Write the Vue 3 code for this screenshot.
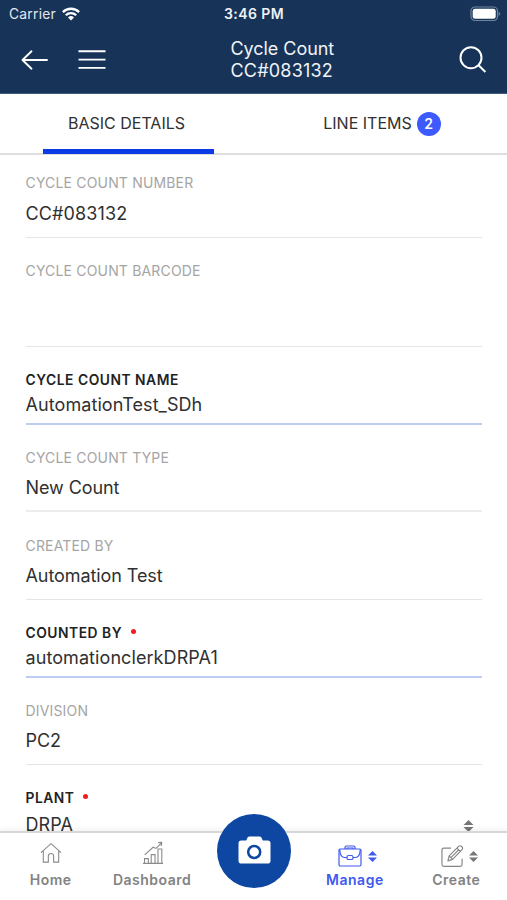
<script setup>
const fields = [
  { label: 'CYCLE COUNT NUMBER', value: 'CC#083132', kind: 'first' },
  { label: 'CYCLE COUNT BARCODE', value: '', kind: 'barcode' },
  { label: 'CYCLE COUNT NAME', value: 'AutomationTest_SDh', kind: 'editable' },
  { label: 'CYCLE COUNT TYPE', value: 'New Count', kind: 'thick' },
  { label: 'CREATED BY', value: 'Automation Test', kind: 'created' },
  { label: 'COUNTED BY', value: 'automationclerkDRPA1', kind: 'editable', required: true },
  { label: 'DIVISION', value: 'PC2', kind: '' },
  { label: 'PLANT', value: 'DRPA', kind: 'editable plant', required: true, select: true },
]
</script>

<template>
  <div class="screen">
    <header class="header">
      <div class="status">
        <div class="carrier">
          <span>Carrier</span>
          <svg width="18" height="14" viewBox="0 0 18 14" fill="none" stroke="#fff" stroke-width="2.3">
            <path d="M.9 5.1a11.5 11.5 0 0 1 16.2 0M3.8 8.2a7.4 7.4 0 0 1 10.4 0" />
            <path d="M6 10.4a4.3 4.3 0 0 1 6 0L9 13.5Z" fill="#fff" stroke="none" />
          </svg>
        </div>
        <strong class="time">3:46 PM</strong>
        <svg class="battery" width="31" height="16" viewBox="0 0 31 16">
          <rect x="1" y="1" width="26.5" height="13.5" rx="4" fill="none" stroke="#71839b" stroke-width="1.2" />
          <rect x="2.7" y="2.8" width="23" height="10" rx="2.4" fill="#fff" />
          <path d="M28.7 5.5q3 2.3 0 4.6Z" fill="#71839b" />
        </svg>
      </div>
      <div class="toolbar">
        <div class="left">
          <svg width="28" height="22" viewBox="0 0 28 22" fill="none" stroke="#fff" stroke-width="1.9" stroke-linecap="round" stroke-linejoin="round">
            <path d="M26 11H1.5M10.5 2.3 1.5 11l9 8.7" />
          </svg>
          <svg width="28" height="22" viewBox="0 0 28 22" fill="none" stroke="#fff" stroke-width="1.9">
            <path d="M.5 2.2h27M.5 10.6h27M.5 18.9h27" />
          </svg>
        </div>
        <h1 class="title"><span>Cycle Count</span><br><span class="number">CC#083132</span></h1>
        <svg class="search" width="28" height="28" viewBox="0 0 28 28" fill="none" stroke="#fff" stroke-width="2">
          <circle cx="12" cy="11.7" r="10.5" />
          <path d="m19.6 19.2 6.8 6.8" />
        </svg>
      </div>
    </header>

    <nav class="tabs">
      <div class="tab active"><span>BASIC DETAILS</span></div>
      <div class="tab"><span>LINE ITEMS</span><span class="badge">2</span></div>
    </nav>

    <main class="fields">
      <section v-for="field in fields" :key="field.label" class="field" :class="field.kind">
        <div class="label">{{ field.label }}<i v-if="field.required" class="required" /></div>
        <div class="value">
          <span>{{ field.value }}</span>
          <svg v-if="field.select" class="sort large" viewBox="0 0 10 12"><path d="M0 5 5 0l5 5ZM0 7h10l-5 5Z" /></svg>
        </div>
      </section>
    </main>

    <footer class="bottom">
      <div class="item">
        <div class="glyph home">
          <svg width="22" height="22" viewBox="0 0 24 24" fill="none" stroke="#8b8b8b" stroke-width="1.2">
            <path d="M1 11.500 12 1.800l11 9.700M3.600 9.500V22h5.500v-6.500c0-4 5.800-4 5.800 0V22h5.500V9.500" />
          </svg>
        </div>
        <span>Home</span>
      </div>
      <div class="item">
        <div class="glyph chart">
          <svg width="21" height="25" viewBox="0 0 22 26" fill="none" stroke="#8b8b8b" stroke-width="1.150">
            <path d="M0 24.400h21M1.600 24.400v-5h4v5M8.600 24.400v-9.200h4v9.200M15.700 24.400V9.300h4v15.100" />
            <path d="m1.800 15.500 8.800-8 3 1.200 5.600-5.600M15.800 2.700l3.800-.3-.4 3.800" />
          </svg>
        </div>
        <span>Dashboard</span>
      </div>
      <div class="item"></div>
      <div class="item selected">
        <div class="glyph pair">
          <svg width="24" height="22" viewBox="0 0 24 22" fill="none" stroke="#4059ee" stroke-width="1.2">
            <rect x="1" y="4" width="22" height="17" rx="1.2" />
            <path d="M7 4V2.400Q7 1 8.400 1h7.200Q17 1 17 2.400V4M9 4V3h6v1M1.800 4.500c.1 5.700 1.700 8 5 8h10.400c3.300 0 4.900-2.300 5-8" />
            <rect x="9" y="10.500" width="6" height="4" rx="1.600" fill="#fff" />
          </svg>
          <svg class="sort" viewBox="0 0 10 12"><path d="M0 5 5 0l5 5ZM0 7h10l-5 5Z" /></svg>
        </div>
        <span>Manage</span>
      </div>
      <div class="item">
        <div class="glyph pair create">
          <svg width="23" height="24" viewBox="0 0 24 24" fill="none" stroke="#858585" stroke-width="1.2" stroke-linejoin="round">
            <path d="M10.500 3.800H3q-2 0-2 2v15q0 2 2 2h17q2 0 2-2v-6" />
            <path d="m7.200 17.100 1.300-5.200L18.400 2q1.500-1.400 3.200.1 1.700 1.600.3 3.200l-9.800 10.200ZM8.500 11.900l3.600 3.600M16.600 3.800l3.500 3.500M10.400 13.600l8-8" />
          </svg>
          <svg class="sort" viewBox="0 0 10 12"><path d="M0 5 5 0l5 5ZM0 7h10l-5 5Z" /></svg>
        </div>
        <span>Create</span>
      </div>
      <div class="camera">
        <svg width="33" height="29" viewBox="0 0 33 29">
          <path d="M3.300 4.600H8.200L9.600 1.600Q10.200.5 11.500.5h10Q22.800.5 23.400 1.600L24.800 4.600h4.900q2.800 0 2.800 2.800v17.300q0 2.800-2.800 2.800H3.300Q.5 27.500.5 24.700V7.400Q.5 4.600 3.300 4.600Z" fill="#fff" />
          <circle cx="16.200" cy="16" r="6" fill="#fff" stroke="#0d47a1" stroke-width="2.500" />
        </svg>
      </div>
    </footer>
  </div>
</template>

<style>
body { background: #fff; }
</style>

<style scoped>
* { box-sizing: border-box; }
svg { display: block; flex: none; }
.screen { position: relative; display: flex; flex-direction: column; width: 507px; height: 900px; overflow: hidden; background: #fff; color: #303030; font-family: Inter, "Liberation Sans", sans-serif; }
.header { height: 94px; flex: none; background: #173458; color: #fff; border-bottom: 1px solid #405b7b; }
.status { height: 27px; display: grid; grid-template-columns: 1fr auto 1fr; align-items: center; padding: 0 6px 0 9px; }
.carrier { display: flex; align-items: center; gap: 6px; font-size: 13.800px; letter-spacing: .25px; color: #e3e8ee; }
.time { font-size: 14px; font-weight: 600; line-height: 20px; letter-spacing: .4px; margin-left: -2px; color: #eef1f5; }
.battery { justify-self: end; }
.toolbar { height: 66px; display: grid; grid-template-columns: 209.500px auto 1fr; align-items: center; padding: 0 20px 1px 21px; }
.left { display: flex; gap: 29px; padding-top: 1px; }
.title { margin: 0; font-size: 18px; font-weight: 400; line-height: 22px; letter-spacing: -.05px; color: #f1f3f7; }
.number { letter-spacing: .2px; }
.search { justify-self: end; }
.tabs { height: 61px; flex: none; display: grid; grid-template-columns: 257px 250px; border-bottom: 2px solid #dedede; }
.tab { display: flex; align-items: center; justify-content: center; gap: 5px; height: 59px; font-size: 16px; }
.tab > span:first-child { margin-top: -2px; }
.tab.active { width: 171px; margin-left: 43px; padding: 4px 4px 0 0; border-bottom: 5px solid #0b3be4; height: 60px; }
.badge { display: grid; place-items: center; width: 24px; height: 24px; border-radius: 50%; background: #3d5afe; color: #fff; font-size: 14px; font-weight: 600; }
.fields { flex: 1; min-height: 0; padding: 0 25px 0 25.500px; overflow: hidden; }
.field { height: 87px; padding-top: 23px; border-bottom: 1px solid #e5e5e5; }
.field.first { height: 83px; padding-top: 18px; }
.field.first .value { margin-top: 10px; letter-spacing: .12px; }
.field.barcode { height: 109px; }
.field.created { height: 88px; padding-top: 24px; }
.field.editable { height: 78px; border-bottom: 2px solid #c0cdf2; }
.field.thick { border-bottom: 2px solid #ededed; }
.label { height: 20px; line-height: 20px; font-size: 14px; letter-spacing: .17px; color: #a5a5a5; display: flex; }
.editable .label { color: #222; font-weight: 600; font-size: 13.800px; letter-spacing: .53px; }
.required { width: 5px; height: 5px; border-radius: 50%; background: #f51c20; margin: 6px 0 0 9px; }
.value { display: flex; justify-content: space-between; align-items: center; height: 22px; margin-top: 9px; font-size: 18px; line-height: 22px; letter-spacing: -.08px; }
.editable .value { margin-top: 4px; letter-spacing: .08px; }
.plant .value { margin-top: 6px; }
.sort { width: 9px; height: 11px; fill: #777; }
.sort.large { width: 11px; height: 12px; margin: 1px 8px 0 0; }
.bottom { position: absolute; left: 0; bottom: 0; width: 507px; height: 69px; display: grid; grid-template-columns: repeat(5, 1fr); border-top: 2px solid #d7d7d7; background: #fff; box-shadow: 0 -2px 5px rgba(0, 0, 0, .06); }
.item { display: flex; flex-direction: column; align-items: center; color: #828282; font-size: 14px; font-weight: 600; letter-spacing: .5px; }
.item span { line-height: 18px; }
.glyph { height: 38px; display: flex; align-items: center; padding-top: 2px; }
.home { padding: 1px 0 0 1px; }
.chart { padding: 1px 0 0 2px; }
.pair { gap: 6px; padding: 8px 0 0 5px; }
.create { gap: 5px; padding-left: 6px; }
.selected { color: #4059ee; }
.selected .sort { fill: #4059ee; }
.camera { position: absolute; left: 217px; top: -19px; width: 74px; height: 74px; padding-bottom: 2px; border-radius: 50%; background: #0d47a1; display: grid; place-items: center; }
</style>
